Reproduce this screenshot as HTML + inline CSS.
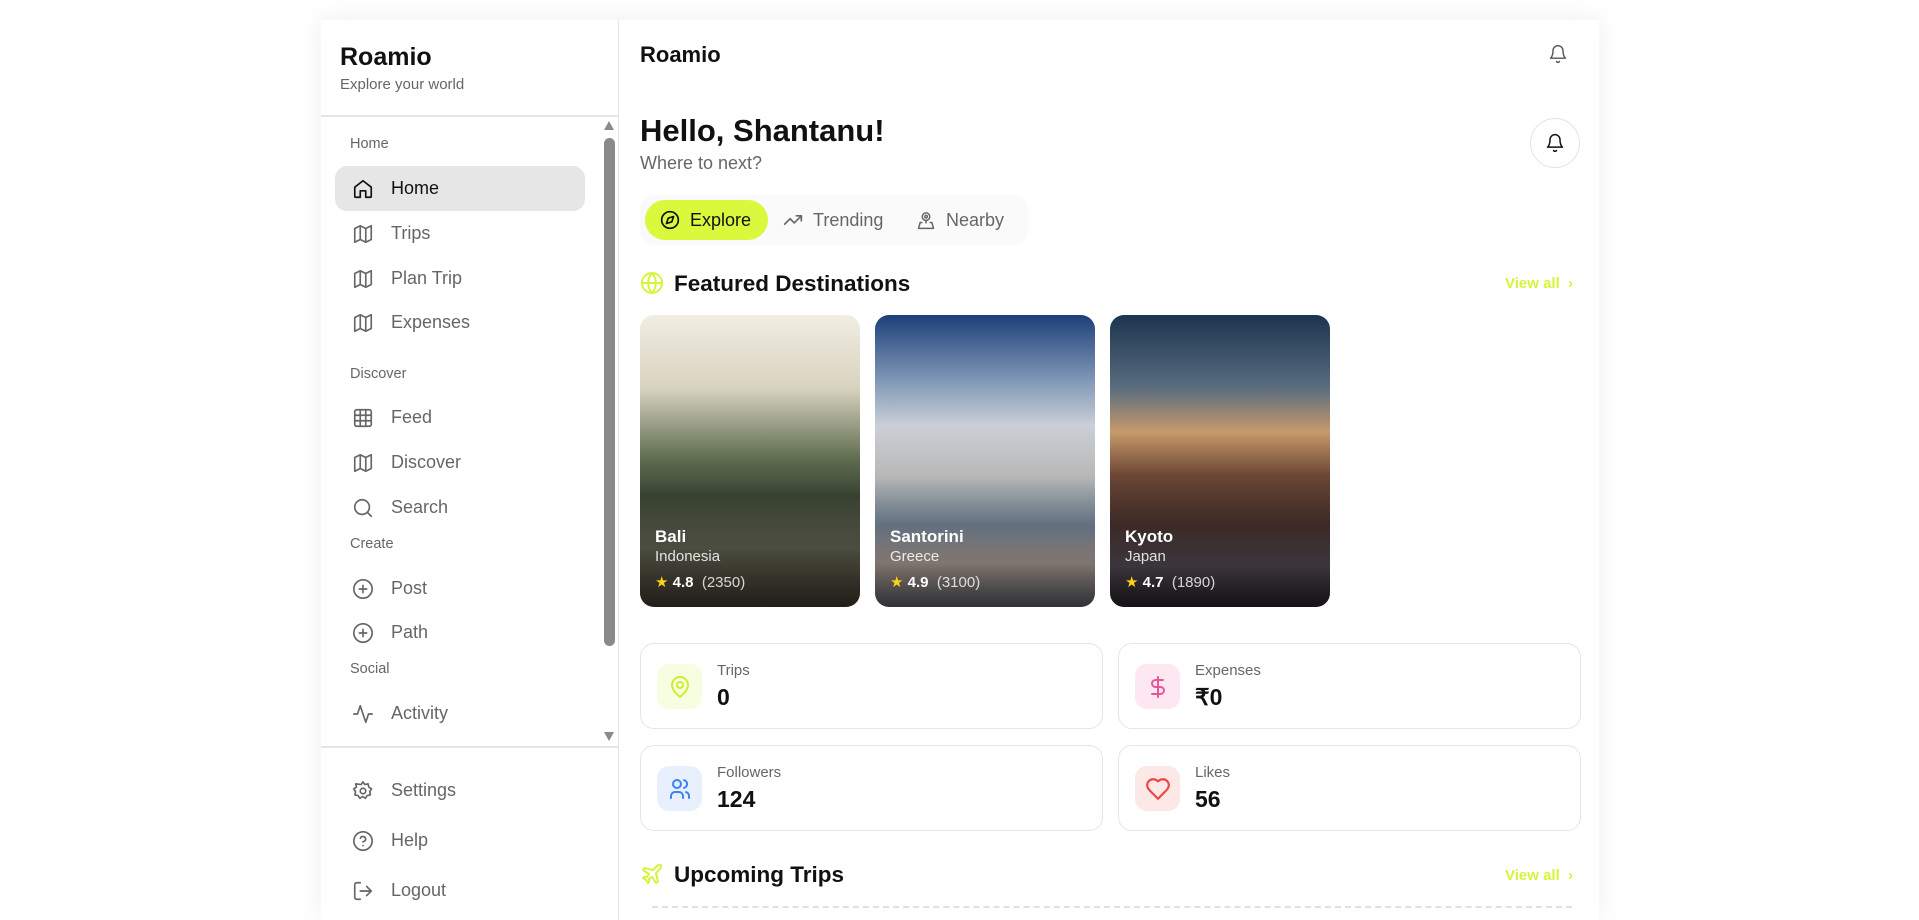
<!DOCTYPE html>
<html><head><meta charset="utf-8"><style>
*{box-sizing:border-box;margin:0;padding:0}
body{width:1919px;height:908px;overflow:hidden;background:#fff;font-family:"Liberation Sans",sans-serif;color:#111;position:relative}
.abs{position:absolute}
.shell{position:absolute;left:321px;top:20px;width:1278px;height:900px;background:#fff;box-shadow:0 0 24px rgba(0,0,0,0.07)}
.side{position:absolute;left:321px;top:20px;width:298px;height:900px;border-right:1px solid #e6e6e6}
svg{fill:none;stroke-linecap:round;stroke-linejoin:round}
.nav{position:absolute;left:335px;width:250px;height:45px;display:flex;align-items:center;padding-left:17px;font-size:18px;color:#666;border-radius:12px}
.nav svg{width:22px;height:22px;stroke:#666;stroke-width:1.8;margin-right:17px}
.lbl{position:absolute;left:350px;font-size:14.5px;color:#666}
.card{position:absolute;top:315px;width:220px;height:292px;border-radius:14px;overflow:hidden}
.card .ov{position:absolute;left:0;right:0;bottom:0;height:130px;background:linear-gradient(to bottom,rgba(0,0,0,0),rgba(0,0,0,0.55))}
.card .t{position:absolute;left:15px;color:#fff}
.stat{position:absolute;width:463px;height:86px;border:1.5px solid #e5e5e5;border-radius:14px}
.stat .ib{position:absolute;left:16px;top:20px;width:45px;height:45px;border-radius:12px;display:flex;align-items:center;justify-content:center}
.stat .l{position:absolute;left:76px;top:18px;font-size:15px;color:#666}
.stat .v{position:absolute;left:76px;top:40px;font-size:23px;font-weight:bold;color:#111}
</style></head><body>
<div class="shell"></div>
<div class="side"></div>
<div class="abs" style="left:340px;top:43px;font-size:25px;font-weight:bold">Roamio</div>
<div class="abs" style="left:340px;top:76px;font-size:15px;color:#666">Explore your world</div>
<div class="abs" style="left:321px;top:115px;width:298px;height:1.5px;background:#e5e5e5"></div>
<div class="abs" style="left:321px;top:746px;width:298px;height:1.5px;background:#e5e5e5"></div>
<div class="abs" style="left:604px;top:138px;width:11px;height:508px;background:#8a8a8a;border-radius:6px"></div>
<div class="abs" style="left:604px;top:121px;width:0;height:0;border-left:5px solid transparent;border-right:5px solid transparent;border-bottom:9px solid #8a8a8a"></div>
<div class="abs" style="left:604px;top:732px;width:0;height:0;border-left:5px solid transparent;border-right:5px solid transparent;border-top:9px solid #8a8a8a"></div>

<div class="lbl" style="top:136px">Home</div>
<div class="nav" style="top:166px;background:#e6e6e6;color:#111"><svg viewBox="0 0 24 24" style="stroke:#111"><path d="M3 10l9-7 9 7v10a1 1 0 0 1-1 1h-5v-7H9v7H4a1 1 0 0 1-1-1z"/></svg>Home</div>
<div class="nav" style="top:211px"><svg viewBox="0 0 24 24"><path d="M3 6l6-3 6 3 6-3v15l-6 3-6-3-6 3z M9 3v15 M15 6v15"/></svg>Trips</div>
<div class="nav" style="top:256px"><svg viewBox="0 0 24 24"><path d="M3 6l6-3 6 3 6-3v15l-6 3-6-3-6 3z M9 3v15 M15 6v15"/></svg>Plan Trip</div>
<div class="nav" style="top:300px"><svg viewBox="0 0 24 24"><path d="M3 6l6-3 6 3 6-3v15l-6 3-6-3-6 3z M9 3v15 M15 6v15"/></svg>Expenses</div>
<div class="lbl" style="top:366px">Discover</div>
<div class="nav" style="top:395px"><svg viewBox="0 0 24 24"><rect x="3" y="3" width="18" height="18" rx="2"/><path d="M3 9h18M3 15h18M9 3v18M15 3v18"/></svg>Feed</div>
<div class="nav" style="top:440px"><svg viewBox="0 0 24 24"><path d="M3 6l6-3 6 3 6-3v15l-6 3-6-3-6 3z M9 3v15 M15 6v15"/></svg>Discover</div>
<div class="nav" style="top:485px"><svg viewBox="0 0 24 24"><circle cx="11" cy="11" r="8"/><path d="M21 21l-4.3-4.3"/></svg>Search</div>
<div class="lbl" style="top:536px">Create</div>
<div class="nav" style="top:566px"><svg viewBox="0 0 24 24"><circle cx="12" cy="12" r="10"/><path d="M12 8v8M8 12h8"/></svg>Post</div>
<div class="nav" style="top:610px"><svg viewBox="0 0 24 24"><circle cx="12" cy="12" r="10"/><path d="M12 8v8M8 12h8"/></svg>Path</div>
<div class="lbl" style="top:661px">Social</div>
<div class="nav" style="top:691px"><svg viewBox="0 0 24 24"><path d="M22 12h-4l-3 9L9 3l-3 9H2"/></svg>Activity</div>
<div class="nav" style="top:768px"><svg viewBox="0 0 24 24"><circle cx="12" cy="12" r="3"/><path d="M12 2l2 3 3.5-.8.8 3.5 3 2-2 3 .8 3.5-3.5.8-2 3-3-2-3 2-2-3-3.5-.8.8-3.5-2-3 3-2-.8-3.5L10 5z"/></svg>Settings</div>
<div class="nav" style="top:818px"><svg viewBox="0 0 24 24"><circle cx="12" cy="12" r="10"/><path d="M9.1 9a3 3 0 0 1 5.8 1c0 2-3 3-3 3M12 17h.01"/></svg>Help</div>
<div class="nav" style="top:868px"><svg viewBox="0 0 24 24"><path d="M9 21H5a2 2 0 0 1-2-2V5a2 2 0 0 1 2-2h4M16 17l5-5-5-5M21 12H9"/></svg>Logout</div>

<div class="abs" style="left:640px;top:42px;font-size:22px;font-weight:bold">Roamio</div>
<svg class="abs" style="left:1548px;top:44px;width:20px;height:20px;stroke:#555;stroke-width:1.7" viewBox="0 0 24 24"><path d="M6 8a6 6 0 0 1 12 0c0 7 3 9 3 9H3s3-2 3-9M10.3 21a1.9 1.9 0 0 0 3.4 0"/></svg>
<div class="abs" style="left:640px;top:113px;font-size:31px;font-weight:bold">Hello, Shantanu!</div>
<div class="abs" style="left:640px;top:153px;font-size:18px;color:#666">Where to next?</div>
<div class="abs" style="left:1530px;top:118px;width:50px;height:50px;border:1px solid #e3e3e3;border-radius:50%"></div>
<svg class="abs" style="left:1545px;top:133px;width:20px;height:20px;stroke:#111;stroke-width:1.8" viewBox="0 0 24 24"><path d="M6 8a6 6 0 0 1 12 0c0 7 3 9 3 9H3s3-2 3-9M10.3 21a1.9 1.9 0 0 0 3.4 0"/></svg>

<div class="abs" style="left:640px;top:195px;width:388px;height:50px;background:#fafafa;border-radius:14px"></div>
<div class="abs" style="left:645px;top:200px;width:123px;height:40px;background:#daf83c;border-radius:20px"></div>
<svg class="abs" style="left:660px;top:210px;width:20px;height:20px;stroke:#111;stroke-width:2" viewBox="0 0 24 24"><circle cx="12" cy="12" r="10"/><path d="M16.2 7.8l-2 6.4-6.4 2 2-6.4z"/></svg>
<div class="abs" style="left:690px;top:210px;font-size:18px;color:#111">Explore</div>
<svg class="abs" style="left:783px;top:210px;width:20px;height:20px;stroke:#666;stroke-width:2" viewBox="0 0 24 24"><path d="M22 7l-8.5 8.5-5-5L2 17M16 7h6v6"/></svg>
<div class="abs" style="left:813px;top:210px;font-size:18px;color:#666">Trending</div>
<svg class="abs" style="left:916px;top:209px;width:20px;height:22px;stroke:#666;stroke-width:1.8" viewBox="0 0 24 24"><circle cx="12" cy="8" r="4.5"/><circle cx="12" cy="8" r="1.5"/><path d="M12 12.5v3M7 15H5l-2 7h18l-2-7h-2"/></svg>
<div class="abs" style="left:946px;top:210px;font-size:18px;color:#666">Nearby</div>

<svg class="abs" style="left:640px;top:271px;width:24px;height:24px;stroke:#d4f53c;stroke-width:2" viewBox="0 0 24 24"><circle cx="12" cy="12" r="10"/><path d="M2 12h20M12 2a15 15 0 0 1 0 20M12 2a15 15 0 0 0 0 20"/></svg>
<div class="abs" style="left:674px;top:271px;font-size:22.5px;font-weight:bold">Featured Destinations</div>
<div class="abs" style="left:1505px;top:275px;font-size:15px;color:#d4f53c;font-weight:bold">View all &nbsp;›</div>

<div class="card" style="left:640px;background:linear-gradient(180deg,#f1ede2 0%,#d8d3bf 25%,#5b6a4d 50%,#3c4634 62%,#6c6e5c 80%,#4a4436 100%)"><div class="ov"></div>
<div class="t" style="top:212px;font-size:17px;font-weight:bold">Bali</div><div class="t" style="top:233px;font-size:15px;opacity:.85">Indonesia</div><div class="t" style="top:258px;font-size:15px"><span style="color:#fcd116">★</span> <b>4.8</b> &nbsp;<span style="opacity:.8">(2350)</span></div></div>
<div class="card" style="left:875px;background:linear-gradient(180deg,#1d3f7a 0%,#7e96b6 22%,#cbcfd6 38%,#b8b8b6 55%,#7a8ca0 72%,#c9b8ae 85%,#6b6f77 100%)"><div class="ov"></div>
<div class="t" style="top:212px;font-size:17px;font-weight:bold">Santorini</div><div class="t" style="top:233px;font-size:15px;opacity:.85">Greece</div><div class="t" style="top:258px;font-size:15px"><span style="color:#fcd116">★</span> <b>4.9</b> &nbsp;<span style="opacity:.8">(3100)</span></div></div>
<div class="card" style="left:1110px;background:linear-gradient(180deg,#1c3550 0%,#5a6c7e 25%,#c79a6c 40%,#6b4634 55%,#4a3430 72%,#5e5560 86%,#2e2a2e 100%)"><div class="ov"></div>
<div class="t" style="top:212px;font-size:17px;font-weight:bold">Kyoto</div><div class="t" style="top:233px;font-size:15px;opacity:.85">Japan</div><div class="t" style="top:258px;font-size:15px"><span style="color:#fcd116">★</span> <b>4.7</b> &nbsp;<span style="opacity:.8">(1890)</span></div></div>

<div class="stat" style="left:640px;top:643px"><div class="ib" style="background:#f7fde0"><svg style="width:24px;height:24px;stroke:#cdee2e;stroke-width:2" viewBox="0 0 24 24"><path d="M20 10c0 6-8 12-8 12s-8-6-8-12a8 8 0 0 1 16 0z"/><circle cx="12" cy="10" r="3"/></svg></div><div class="l">Trips</div><div class="v">0</div></div>
<div class="stat" style="left:1118px;top:643px"><div class="ib" style="background:#fde7f1"><svg style="width:24px;height:24px;stroke:#e8579a;stroke-width:2" viewBox="0 0 24 24"><path d="M12 2v20M17 5H9.5a3.5 3.5 0 0 0 0 7h5a3.5 3.5 0 0 1 0 7H6"/></svg></div><div class="l">Expenses</div><div class="v">₹0</div></div>
<div class="stat" style="left:640px;top:745px"><div class="ib" style="background:#e8f0fe"><svg style="width:24px;height:24px;stroke:#3b82f6;stroke-width:2" viewBox="0 0 24 24"><circle cx="9" cy="7" r="4"/><path d="M3 21v-2a4 4 0 0 1 4-4h4a4 4 0 0 1 4 4v2M16 3.1a4 4 0 0 1 0 7.8M21 21v-2a4 4 0 0 0-3-3.9"/></svg></div><div class="l">Followers</div><div class="v">124</div></div>
<div class="stat" style="left:1118px;top:745px"><div class="ib" style="background:#fde8e8"><svg style="width:26px;height:26px;stroke:#ef4444;stroke-width:2" viewBox="0 0 24 24"><path d="M19 14c1.5-1.5 3-3.2 3-5.5A5.5 5.5 0 0 0 16.5 3c-1.8 0-3 .5-4.5 2-1.5-1.5-2.7-2-4.5-2A5.5 5.5 0 0 0 2 8.5c0 2.3 1.5 4 3 5.5l7 7z"/></svg></div><div class="l">Likes</div><div class="v">56</div></div>

<svg class="abs" style="left:640px;top:862px;width:24px;height:24px;stroke:#d4f53c;stroke-width:2" viewBox="0 0 24 24"><path d="M17.8 19.2L16 11l3.5-3.5C21 6 21.5 4 21 3c-1-.5-3 0-4.5 1.5L13 8 4.8 6.2c-.5-.1-.9.1-1.1.5l-.3.5c-.2.5-.1 1 .3 1.3L9 12l-2 3H4l-1 1 3 2 2 3 1-1v-3l3-2 3.5 5.3c.3.4.8.5 1.3.3l.5-.2c.4-.3.6-.7.5-1.2z"/></svg>
<div class="abs" style="left:674px;top:862px;font-size:22.5px;font-weight:bold">Upcoming Trips</div>
<div class="abs" style="left:1505px;top:867px;font-size:15px;color:#d4f53c;font-weight:bold">View all &nbsp;›</div>
<div class="abs" style="left:652px;top:906px;width:920px;border-top:2px dashed #e0e0e0"></div>
</body></html>
